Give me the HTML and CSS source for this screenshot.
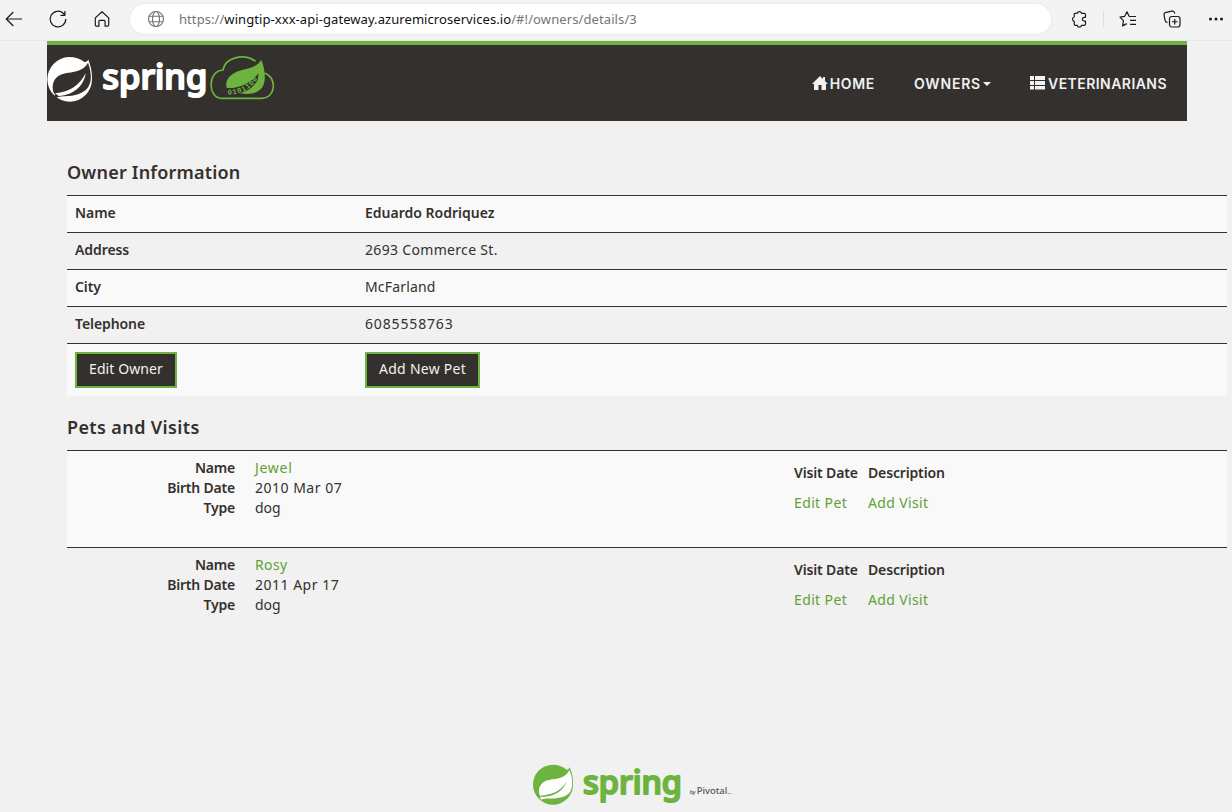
FILE: index.html
```html
<!DOCTYPE html>
<html lang="en">
<head>
<meta charset="utf-8">
<title>PetClinic :: Owner Information</title>
<link rel="stylesheet" href="styles.css">
</head>
<body>
<div class="toolbar">
  <svg class="tool back" width="18" height="18" viewBox="0 0 18 18"><path d="M17 9H1.5M8.3 2L1.3 9l7 7"/></svg>
  <svg class="tool reload" width="18" height="18" viewBox="0 0 18 18"><path d="M16.8 9A7.8 7.8 0 1 1 14.3 3.3L15.7 4.9M15.9 1v4.3h-4.4"/></svg>
  <svg class="tool home" width="18" height="18" viewBox="0 0 18 18"><path d="M2.3 7.900L9 1.700l6.700 6.200V15a1.200 1.200 0 0 1-1.200 1.200h-2.400V11.500a1.100 1.100 0 0 0-1.100-1.100H7a1.100 1.100 0 0 0-1.100 1.100V16.200H3.500A1.200 1.200 0 0 1 2.300 15z"/></svg>
  <div class="address">
    <svg class="globe" width="18" height="18" viewBox="0 0 18 18"><circle cx="9" cy="9" r="7.500"/><ellipse cx="9" cy="9" rx="3.500" ry="7.500"/><path d="M2 6.300h14M2 11.700h14"/></svg>
    <span class="url">https://<b>wingtip-xxx-api-gateway.azuremicroservices.io</b><span class="path">/#!/owners/details/3</span></span>
  </div>
  <svg class="tool puzzle" width="18" height="18" viewBox="0 0 18 18"><path d="M4 3.300H6.200a2.200 2.200 0 0 1 4.300 0H13.200a1.300 1.300 0 0 1 1.300 1.300V7.300H13.300a1.900 1.900 0 0 0 0 3.800H14.500V14a1.300 1.300 0 0 1-1.300 1.300H10.500a2.200 2.200 0 0 1-4.300 0H4.500A1.300 1.300 0 0 1 3.200 14V11.300a2.200 2.200 0 0 1 0-4.300V4.300A1 1 0 0 1 4 3.300z"/></svg>
  <i class="split"></i>
  <svg class="tool star" width="18" height="18" viewBox="0 0 18 18"><path d="M10.200 6.500L8 1.700 5.700 6.300 1 7.100l3.400 3.500-.8 5.300L7.800 13.600M10.200 6.500H17M11 10.300h6M11 14.300h6"/></svg>
  <svg class="tool collect" width="18" height="18" viewBox="0 0 18 18"><rect x="6.500" y="6.500" width="10.500" height="10.500" rx="2.200"/><path d="M11.750 9v5.500M9 11.750h5.500M4.400 12.700C2.900 12.300 2.300 11.500 2 10.200L1.100 5.300C.8 3.800 1.500 2.700 3 2.400L9 1.200C10.500.9 11.500 1.800 11.800 3.600"/></svg>
  <svg class="dots" width="16" height="4" viewBox="0 0 16 4"><circle cx="2.500" cy="2" r="1.500"/><circle cx="8" cy="2" r="1.500"/><circle cx="13.500" cy="2" r="1.500"/></svg>
</div>

<header class="navbar">
  <svg class="brand" width="228" height="50" viewBox="0 0 684 150">
    <g transform="translate(-22 -54)">
      <path class="white" d="M88 57C105 57 122 62 134 72Q142 73 146 65C153 82 158 103 157 124A67 67 0 1 1 88 57z"/>
      <path class="dark" d="M145 74C153 95 157 122 150 138C142 161 118 170 96 173C80 175 67 173 54 177C49 180 45 177 48 172L43 166C36 150 38 128 53 116C78 96 124 112 145 74z"/>
      <path class="white" d="M138 106C133 142 104 172 57 174L46 166C92 162 119 142 138 106z"/>
      <circle class="dark" cx="49" cy="175" r="5"/>
      <text class="wordmark white" x="188" y="154" textLength="315" lengthAdjust="spacingAndGlyphs">spring</text>
      <path class="cloud" d="M665 181H546C504 181 502 99 550 96C556 60 610 44 648 70M674 105C712 116 711 180 665 181"/>
      <path class="green" d="M665 65C647 94 615 91 591 101C566 112 554 132 562 151C580 152 620 148 656 107C645 141 624 157 588 162C622 173 652 169 668 148C681 127 675 91 665 65z"/>
      <path class="dark" d="M561 150C597 153 635 139 657 106L654 127C637 154 614 168 562 171z"/>
      <path id="bits" fill="none" d="M564 170C602 168 637 156 660 112"/>
      <text class="bits"><textPath href="#bits" textLength="106">0101100</textPath></text>
    </g>
  </svg>
  <nav>
    <a><svg class="glyph" width="16" height="14" viewBox="0 0 16 14"><path d="M8 0l3 3V1h2v4l3 3h-2v6H9.500V9H6.500v5H2V8H0z"/></svg><span class="n1">HOME</span></a>
    <a><span class="n2">OWNERS</span><i class="caret"></i></a>
    <a><svg class="glyph list" width="15" height="14" viewBox="0 0 15 14"><path d="M0 0h4v4H0zM5 0h10v4H5zM0 5h4v4H0zM5 5h10v4H5zM0 10h4v3.500H0zM5 10h10v3.500H5z"/></svg><span class="n3">VETERINARIANS</span></a>
  </nav>
</header>

<main>
  <h2 class="h-owner">Owner Information</h2>
  <table class="info">
    <tr><th>Name</th><td><b>Eduardo Rodriquez</b></td></tr>
    <tr><th>Address</th><td class="street">2693 Commerce St.</td></tr>
    <tr><th>City</th><td class="city">McFarland</td></tr>
    <tr><th>Telephone</th><td class="phone">6085558763</td></tr>
    <tr class="actions"><td><a class="btn">Edit Owner</a></td><td><a class="btn wide">Add New Pet</a></td></tr>
  </table>

  <h2 class="h-pets">Pets and Visits</h2>
  <section class="pet">
    <dl>
      <dt>Name</dt><dd><a class="pet-name">Jewel</a></dd>
      <dt>Birth Date</dt><dd class="date">2010 Mar 07</dd>
      <dt>Type</dt><dd>dog</dd>
    </dl>
    <div class="visits">
      <b>Visit Date</b><b>Description</b>
      <a>Edit Pet</a><a>Add Visit</a>
    </div>
  </section>
  <section class="pet">
    <dl>
      <dt>Name</dt><dd><a class="rosy">Rosy</a></dd>
      <dt>Birth Date</dt><dd class="date">2011 Apr 17</dd>
      <dt>Type</dt><dd>dog</dd>
    </dl>
    <div class="visits">
      <b>Visit Date</b><b>Description</b>
      <a>Edit Pet</a><a>Add Visit</a>
    </div>
  </section>
</main>

<footer>
  <svg width="200" height="46" viewBox="0 0 600 138">
    <g transform="translate(-36 -21)">
      <path class="green" d="M99 29C116 29 130 35 140 44Q146 45 149 37C156 53 160 70 159 89A60 60 0 1 1 99 29z"/>
      <path class="paper" d="M148 45C157 65 160 87 153 105C146 123 126 128 106 130C91 132 78 128 69 132C64 137 57 130 63 126L60 121C53 107 58 91 70 82C91 67 132 80 148 45z"/>
      <path class="green" d="M141 78C130 107 106 125 65 126L62 122C104 119 127 102 141 78z"/>
      <text class="wordmark green small" x="189" y="118" textLength="297" lengthAdjust="spacingAndGlyphs">spring</text>
      <text class="by" x="509" y="118" font-size="18" textLength="18">by</text>
      <text class="by" x="530" y="118" font-size="28" textLength="92" lengthAdjust="spacingAndGlyphs">Pivotal</text>
      <text class="by" x="623" y="118" font-size="7">TM</text>
    </g>
  </svg>
</footer>
</body>
</html>
```
FILE: styles.css
```css
* { box-sizing: border-box; }
body { margin: 0; width: 1232px; height: 812px; overflow: hidden; background: #f1f1f1; color: #34302d; font: 14px/20px "Noto Sans", sans-serif; display: flex; flex-direction: column; }
svg { display: block; flex: none; overflow: visible; }

.toolbar { height: 41px; flex: none; background: #f3f3f3; border-bottom: 1px solid #e6e6e6; display: flex; align-items: center; padding: 0 8px 3px 5px; }
.tool { fill: none; stroke: #1b1b1b; stroke-width: 1.2; stroke-linejoin: round; }
.reload { margin-left: 26px; }
.home { margin-left: 26px; }
.address { margin-left: 19px; width: 921px; height: 30px; border-radius: 15px; background: #fff; box-shadow: 0 0 2px #ddd; display: flex; align-items: center; padding-left: 17px; }
.globe { fill: none; stroke: #737373; stroke-width: 1.1; }
.url { margin-left: 14px; font-size: 13px; letter-spacing: .07px; color: #757575; white-space: nowrap; }
.url b { font-weight: 400; color: #111; }
.path { letter-spacing: .1px; }
.puzzle { margin-left: 20px; }
.split { width: 1px; height: 16px; background: #ddd; margin-left: 14px; }
.star { margin-left: 15px; }
.collect { margin-left: 26px; }
.dots { margin-left: 27px; fill: #1b1b1b; }

.navbar { width: 1140px; height: 80px; flex: none; margin-left: 47px; background: #34302d; border-top: 4px solid #6db33f; display: flex; justify-content: space-between; padding: 11px 20px 0 0; }
.white { fill: #fff; }
.dark { fill: #34302d; }
.green { fill: #6db33f; }
.paper { fill: #fff; }
.cloud { fill: none; stroke: #6db33f; stroke-width: 5; }
.wordmark { font: 500 104px "Noto Sans", sans-serif; stroke: #fff; stroke-width: 6; stroke-linejoin: round; }
.wordmark.small { font-size: 98px; stroke: #6db33f; }
.bits { font: 700 22px "Liberation Mono", monospace; fill: #6db33f; }
nav { display: flex; gap: 39px; height: 55px; align-items: center; font: 600 14px/20px Inter, sans-serif; color: #f1f1f1; }
nav a { display: flex; align-items: center; white-space: nowrap; }
.glyph { fill: #f1f1f1; margin: -2px 2px 0 -1px; }
.list { margin: -2px 3px 0 0; }
.n1 { letter-spacing: .7px; }
.n2 { letter-spacing: .8px; }
.n3 { letter-spacing: .45px; }
.caret { border: 4px solid transparent; border-top-color: #f1f1f1; border-bottom: 0; margin-left: 2px; }

main { padding-left: 67px; width: 1227px; }
h2 { margin: 0; font-size: 18px; line-height: 20px; font-weight: 600; white-space: nowrap; }
.h-owner { margin: 41px 0 13px; letter-spacing: .2px; }
.h-pets { margin: 21px 0 13px; letter-spacing: .38px; }
.info { width: 1160px; border-collapse: separate; border-spacing: 0; table-layout: fixed; }
.info th, .info td { padding: 7px 8px 9px; border-top: 1px solid #34302d; text-align: left; font-weight: 400; vertical-align: top; }
.info .actions td { padding: 8px; }
.info th, .info td:first-child { width: 290px; }
b, dt { font-weight: 600; }
.info th { font-weight: 600; letter-spacing: -.08px; }
.info tr:nth-child(odd) { background: #f9f9f9; }
.street { letter-spacing: .32px; }
.city { letter-spacing: .17px; }
.phone { letter-spacing: .85px; }
.btn { display: block; width: 102px; height: 36px; border: 2px solid #6db33f; background: #34302d; color: #f1f1f1; padding: 5px 12px; letter-spacing: .1px; white-space: nowrap; }
.btn.wide { width: 115px; letter-spacing: .27px; }
.pet { width: 1160px; height: 97px; border-top: 1px solid #34302d; display: grid; grid-template-columns: 722px 1fr; padding-top: 7px; }
.pet:nth-of-type(odd) { background: #f9f9f9; }
dl { margin: 0; display: grid; grid-template-columns: 168px 1fr; column-gap: 20px; align-content: start; }
dt { text-align: right; letter-spacing: -.2px; }
dd { margin: 0; }
.date { letter-spacing: .5px; }
.pet a { color: #5fa134; }
.pet-name { letter-spacing: .7px; }
.rosy { letter-spacing: .4px; }
.visits { display: grid; grid-template-columns: 64px auto; gap: 10px; padding: 5px; justify-content: start; align-content: start; white-space: nowrap; }
.visits b { letter-spacing: -.15px; }
.visits a { letter-spacing: .37px; }

footer { margin-top: auto; height: 50px; flex: none; padding-left: 532px; }
.by { fill: #555; font-family: "Noto Sans", sans-serif; font-weight: 500; }
```
